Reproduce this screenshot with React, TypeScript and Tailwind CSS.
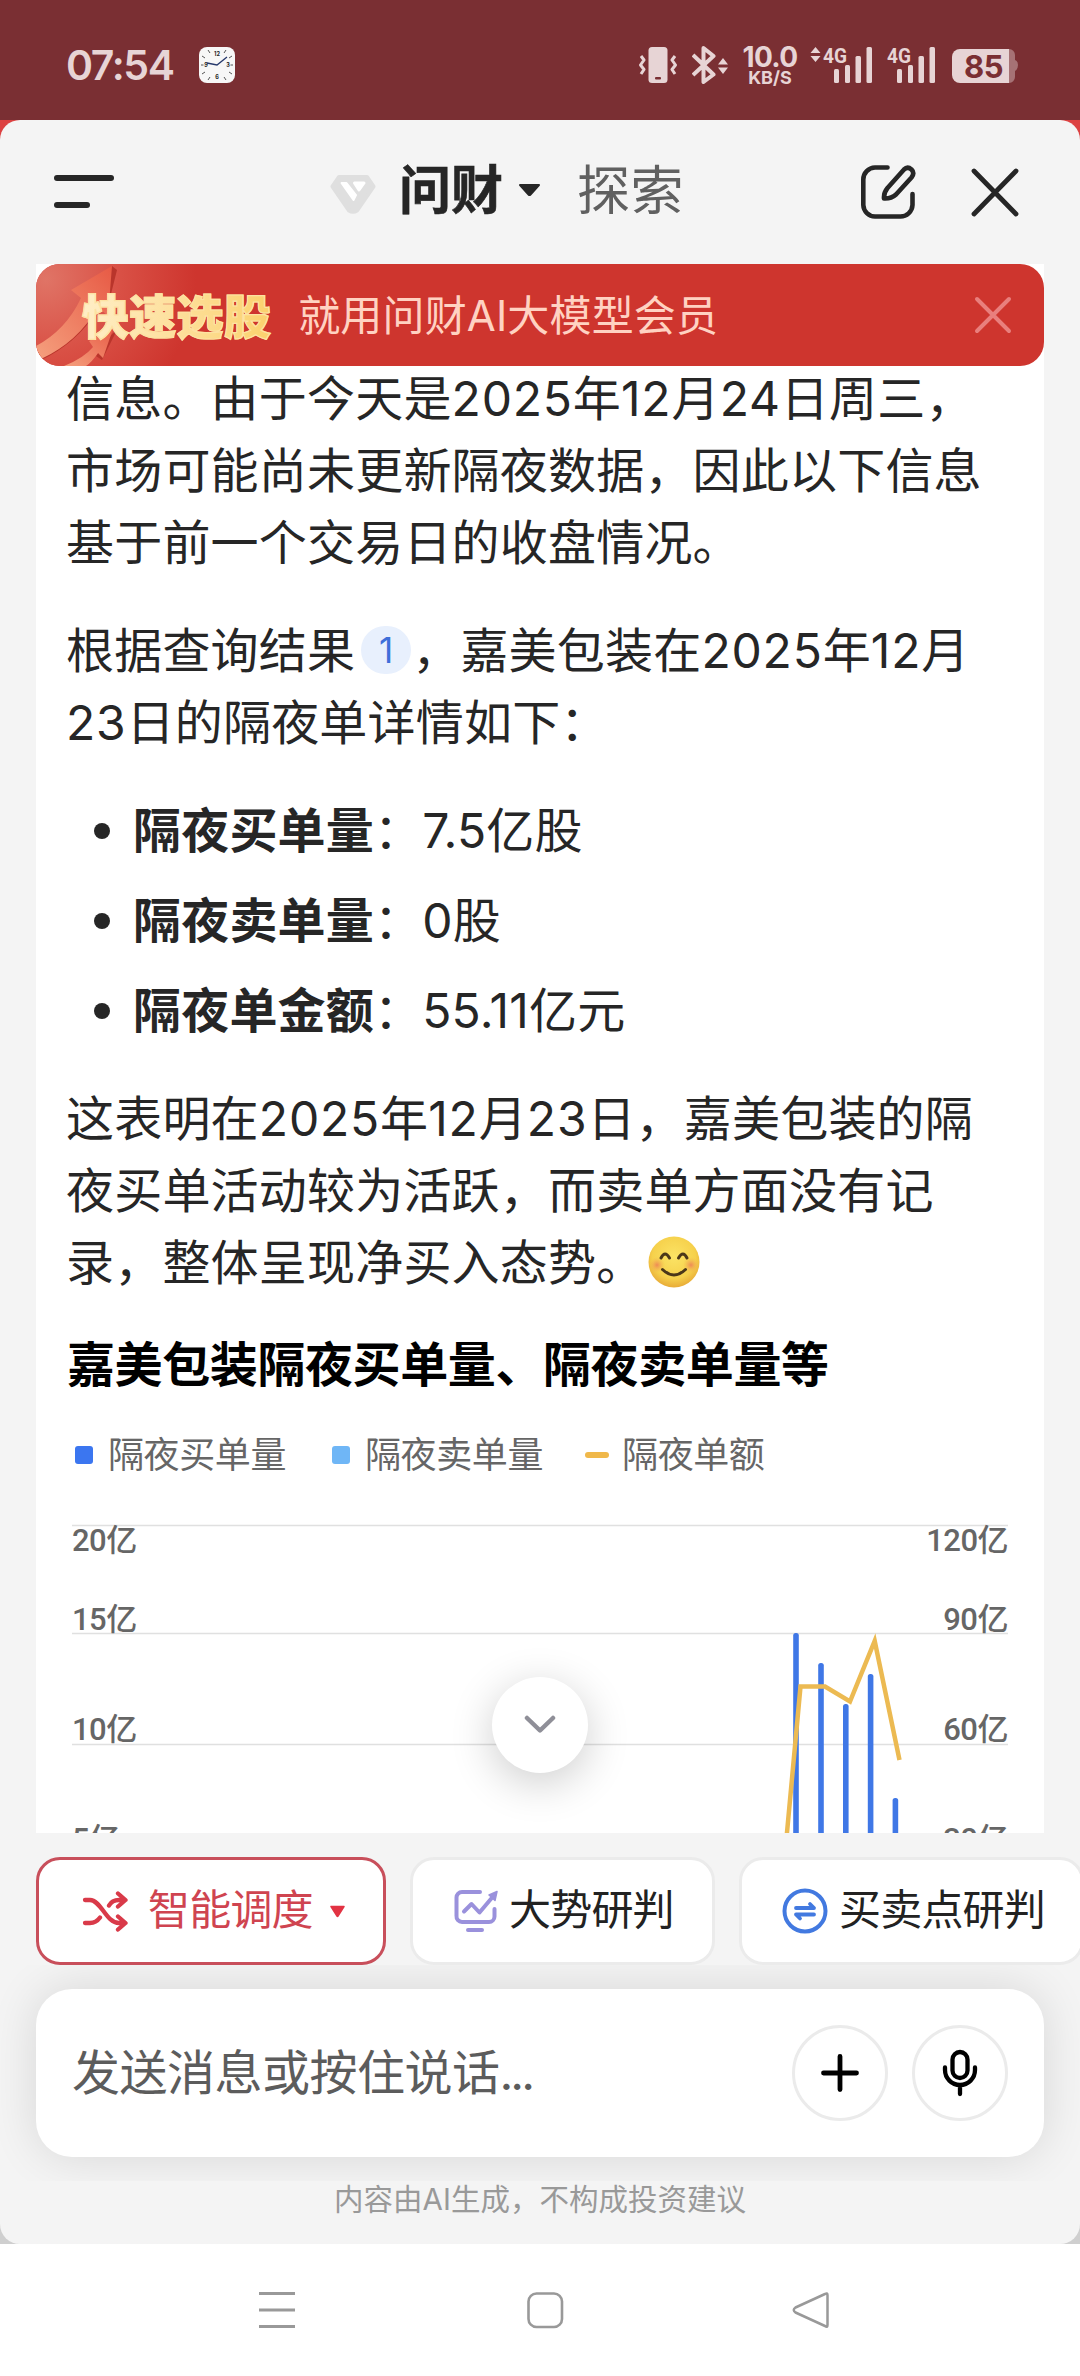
import type { ReactNode } from "react";

const BARS = [
  { x: 724, top: 108 },
  { x: 749, top: 138 },
  { x: 773.8, top: 179 },
  { x: 798.6, top: 149 },
  { x: 823.4, top: 273 },
];

function Signal() {
  return (
    <g fill="#e7d4d5">
      <rect x="0" y="22" width="5" height="14" rx="1.5" />
      <rect x="11" y="18" width="5" height="18" rx="1.5" />
      <rect x="21.5" y="9" width="5.5" height="27" rx="1.5" />
      <rect x="32.5" y="0" width="5.5" height="36" rx="1.5" />
    </g>
  );
}

function StatusBar() {
  return (
    <div className="flex h-[120px] items-start bg-[#7a2f33] text-[#e7d4d5]">
      <div className="mt-[41px] ml-[66px] w-[110px] text-[41px] leading-[48px] font-semibold tracking-[-1.4px]">07:54</div>
      <svg className="mt-[47px] ml-[23px]" width="36" height="36" viewBox="0 0 36 36">
        <rect width="36" height="36" rx="8" fill="#f7f7f7" />
        <g stroke="#555" strokeWidth="1">
          <path d="M9 3l2 3M27 3l-2 3M3 9l3 2M33 9l-3 2M3 27l3-2M33 27l-3-2M9 33l2-3M27 33l-2-3M2 18h2.500M31.500 18h2.500" />
        </g>
        <g fontSize="5.500" fontWeight="700" fill="#222" textAnchor="middle" fontFamily="Inter, sans-serif">
          <text x="18" y="9">12</text>
          <text x="29" y="20">3</text>
          <text x="18" y="32">6</text>
          <text x="7" y="20">9</text>
        </g>
        <path d="M8 16l10 2L28 10" fill="none" stroke="#25386b" strokeWidth="1.300" />
      </svg>
      <svg className="mt-[47px] ml-[404px]" width="38" height="36" viewBox="0 0 38 36">
        <rect x="9.500" y="0" width="19" height="36" rx="3.500" fill="#e7d4d5" />
        <rect x="16" y="30" width="6" height="2.500" rx="1" fill="#7a2f33" />
        <path d="M2 9l3 4-3.500 5L5 22.500 2 27M36 9l-3 4 3.500 5-3.500 4.500 3 4.500" fill="none" stroke="#e7d4d5" strokeWidth="3" strokeLinejoin="round" />
      </svg>
      <svg className="mt-[46px] ml-[15px]" width="37" height="38" viewBox="0 0 37 38">
        <path d="M1 9l20.500 19.500L11.500 36V2l10 8L1 29" fill="none" stroke="#e7d4d5" strokeWidth="4" strokeLinejoin="round" />
        <path d="M31 12l5 6.500H26zM31 28l5-6.500H26z" fill="#e7d4d5" />
      </svg>
      <div className="mt-[45px] ml-[13px] flex w-[56px] flex-col items-center font-bold">
        <span className="text-[28px] leading-[24px] tracking-[-0.6px]">10.0</span>
        <span className="text-[18px] leading-[18px]">KB/S</span>
      </div>
      <svg className="mt-[46px] ml-[12px]" width="64" height="38" viewBox="0 0 64 38">
        <path d="M5.500 1l5 6h-10zM5.500 16l5-6h-10z" fill="#e7d4d5" />
        <text x="13" y="17" fontSize="21" fontWeight="700" fill="#e7d4d5" textLength="24" lengthAdjust="spacingAndGlyphs" fontFamily="Roboto, sans-serif">4G</text>
        <g transform="translate(24 1)"><Signal /></g>
      </svg>
      <svg className="mt-[46px] ml-[12px]" width="52" height="38" viewBox="0 0 52 38">
        <text x="1" y="17" fontSize="21" fontWeight="700" fill="#e7d4d5" textLength="24" lengthAdjust="spacingAndGlyphs" fontFamily="Roboto, sans-serif">4G</text>
        <g transform="translate(11 1)"><Signal /></g>
      </svg>
      <svg className="mt-[49px] ml-[14px]" width="66" height="34" viewBox="0 0 66 34">
        <path d="M57 0a6 6 0 0 1 6 6v5q3 1 3 5t-3 6v6a6 6 0 0 1-6 6z" fill="#a67275" />
        <path d="M8 0H57V34H8a8 8 0 0 1-8-8V8a8 8 0 0 1 8-8z" fill="#e7d4d5" />
        <text x="31.500" y="28.500" fontSize="31" fontWeight="700" fill="#7a2f33" textAnchor="middle" letterSpacing="-0.500" fontFamily="Inter, sans-serif">85</text>
      </svg>
    </div>
  );
}

function Header() {
  return (
    <div className="flex h-[144px] items-start pt-[36px]">
      <svg className="mt-[18px] ml-[54px]" width="60" height="36" viewBox="0 0 60 36">
        <rect y="1" width="60" height="6" rx="3" fill="#262626" />
        <rect y="28" width="36" height="6" rx="3" fill="#262626" />
      </svg>
      <svg className="mt-[17px] ml-[215px]" width="48" height="42" viewBox="0 0 48 42">
        <path d="M10 4H38L44.500 13.500 28 37.500Q24 40 20 37.500L3.500 13.500z" fill="#dfdfdf" stroke="#dfdfdf" strokeWidth="4" strokeLinejoin="round" />
        <path d="M12.500 10h5L27 22l-2.500 5z" fill="#fff" stroke="#fff" strokeWidth="2" strokeLinejoin="round" />
        <path d="M25.500 10H35l-5 7z" fill="#fff" stroke="#fff" strokeWidth="3" strokeLinejoin="round" />
      </svg>
      <div className="mt-[1px] ml-[22px] text-[52px] leading-[68px] font-bold text-[#262626] [-webkit-text-stroke:0.6px_#262626]">问财</div>
      <svg className="mt-[27px] ml-[15px]" width="23" height="15" viewBox="0 0 23 15">
        <path d="M2 2H21L12.500 11.500Q11.500 12.500 10.500 11.500z" fill="#262626" stroke="#262626" strokeWidth="2" strokeLinejoin="round" />
      </svg>
      <div className="mt-[1px] ml-[36px] text-[53px] leading-[68px] tracking-[0.5px] text-[#606060]">探索</div>
      <svg className="mt-[8px] ml-[176px]" width="56" height="56" viewBox="0 0 56 56" fill="none" stroke="#262626" strokeWidth="4.600" strokeLinecap="round" strokeLinejoin="round">
        <path d="M27.500 3.500H15A12 12 0 0 0 3.300 15.500V41A12 12 0 0 0 15 52.500H40A12 12 0 0 0 52.500 41V30" />
        <path d="M24 34.500Q23.500 29 27.500 24L44 5.500Q47.500 2 51.500 5.500 55 9 51.500 13.500L36 30.500Q31 35 24 34.500z" />
      </svg>
      <svg className="mt-[12px] ml-[54px]" width="50" height="50" viewBox="0 0 50 50">
        <path d="M4 3L46 46M46 3L4 46" stroke="#262626" strokeWidth="4.800" strokeLinecap="round" />
      </svg>
    </div>
  );
}

function Banner() {
  return (
    <div className="relative z-10 flex h-[102px] items-center overflow-hidden rounded-[24px] bg-[#ce352e]">
      <svg className="absolute top-0 left-0" width="180" height="102" viewBox="0 0 180 102">
        <defs>
          <radialGradient id="glow" gradientUnits="userSpaceOnUse" cx="10" cy="15" r="150">
            <stop offset="0" stopColor="#e07466" />
            <stop offset="0.500" stopColor="#d95045" />
            <stop offset="1" stopColor="#ce352e" />
          </radialGradient>
          <linearGradient id="arrow" x1="0" y1="1" x2="1" y2="0">
            <stop offset="0" stopColor="#f5a07e" />
            <stop offset="1" stopColor="#e75a45" />
          </linearGradient>
        </defs>
        <rect width="180" height="102" fill="url(#glow)" />
        <path d="M5 96Q40 80 62 46L72 42 81 6 76 2 46 50 0 90z" fill="#b9352b" />
        <path d="M0 82Q30 66 45 34L35 26 76 2 72 52 62 43Q42 78 5 95L0 90z" fill="url(#arrow)" />
        <path d="M66 96L81 66 76 70 60 92z" fill="#b9352b" />
        <path d="M28 102Q48 94 57 83L53 77 78 62 67 94 62 89Q56 98 50 102z" fill="url(#arrow)" />
      </svg>
      <span className="relative mt-[3px] ml-[46px] bg-gradient-to-r from-[#ffeec6] to-[#fbd16c] bg-clip-text text-[47px] leading-[60px] font-black tracking-[0.3px] text-transparent [-webkit-text-stroke:1.2px_#fde2a2]">快速选股</span>
      <span className="relative mt-[1px] ml-[27px] text-[42px] leading-[60px] tracking-[0.15px] text-[#ffd2c2]">就用问财AI大模型会员</span>
      <svg className="absolute top-[32px] right-[32px]" width="38" height="38" viewBox="0 0 38 38">
        <path d="M3 3L35 35M35 3L3 35" stroke="#e97f7d" strokeWidth="4" strokeLinecap="round" />
      </svg>
    </div>
  );
}

function Num({ children }: { children: ReactNode }) {
  return <span className="tracking-[0.8px]">{children}</span>;
}

function Bullet({ label, value }: { label: string; value: string }) {
  return (
    <li className="mb-[18px] flex items-center">
      <i className="mr-[23px] ml-[28px] h-[16px] w-[16px] rounded-full bg-[#262626]" />
      <b>{label}</b>：{value}
    </li>
  );
}

function Blush() {
  return (
    <svg className="ml-[3px] inline-block align-[-9px]" width="54" height="54" viewBox="0 0 54 54">
      <defs>
        <radialGradient id="face" cx="0.500" cy="0.400" r="0.600">
          <stop offset="0" stopColor="#fbe365" />
          <stop offset="0.700" stopColor="#f6d14c" />
          <stop offset="1" stopColor="#e8ab37" />
        </radialGradient>
        <radialGradient id="cheek">
          <stop offset="0" stopColor="#ee8a56" />
          <stop offset="1" stopColor="#f2b84d" stopOpacity="0" />
        </radialGradient>
      </defs>
      <circle cx="27" cy="27" r="25.500" fill="url(#face)" />
      <circle cx="10" cy="30" r="8" fill="url(#cheek)" />
      <circle cx="44" cy="30" r="8" fill="url(#cheek)" />
      <path d="M14 23Q18 15 22.500 23M31.500 23Q36 15 40 23" fill="none" stroke="#4b3719" strokeWidth="3" strokeLinecap="round" />
      <path d="M15.500 34.500Q27 45.500 38.500 34.500" fill="none" stroke="#4b3719" strokeWidth="3" strokeLinecap="round" />
    </svg>
  );
}

function LegendItem({ mark, children }: { mark: ReactNode; children: ReactNode }) {
  return (
    <div className="flex items-center">
      {mark}
      {children}
    </div>
  );
}

function Chart() {
  return (
    <svg className="mt-[44px] ml-[36px] block" width="936" height="310" viewBox="0 0 936 310">
      <g stroke="#e0e0e0" strokeWidth="1.500">
        <path d="M0 2.500H936M0 110.500H936M0 221.500H936" />
      </g>
      <g fill="#3f77e6">
        {BARS.map((b) => (
          <rect key={b.x} x={b.x - 2.8} y={b.top + 2} width="5.600" height="330" rx="2.500" />
        ))}
      </g>
      <path d="M714.500 315L728.500 163.500H753L778 178.500 802.700 118 827.500 237" fill="none" stroke="#ecba52" strokeWidth="4.500" />
      <g fontSize="31" fontWeight="500" fill="#666" fontFamily="Roboto, 'Noto Sans CJK SC', sans-serif" letterSpacing="-0.500">
        <text x="0" y="27.500">20亿</text>
        <text x="0" y="106.500">15亿</text>
        <text x="0" y="216.500">10亿</text>
        <text x="0" y="326.500">5亿</text>
        <g textAnchor="end">
          <text x="936" y="27.500">120亿</text>
          <text x="936" y="106.500">90亿</text>
          <text x="936" y="216.500">60亿</text>
          <text x="936" y="326.500">30亿</text>
        </g>
      </g>
    </svg>
  );
}

function Answer() {
  return (
    <div className="relative mx-[36px] h-[1569px] overflow-hidden bg-white">
      <Banner />
      <div className="-mt-[3px] pl-[30px] text-[48px] leading-[72px] tracking-[0.2px] whitespace-nowrap text-[#262626]">
        <p>
          信息。由于今天是<Num>2025</Num>年<Num>12</Num>月<Num>24</Num>日周三，
          <br />
          市场可能尚未更新隔夜数据，因此以下信息
          <br />
          基于前一个交易日的收盘情况。
        </p>
        <p className="mt-[36px]">
          根据查询结果
          <span className="mr-[1px] ml-[6px] inline-flex h-[48px] w-[50px] items-center justify-center rounded-full bg-[#e8f0fd] align-[5px] text-[35px] leading-[48px] text-[#3f6fd9]">1</span>
          ，嘉美包装在<Num>2025</Num>年<Num>12</Num>月
          <br />
          <Num>23</Num>日的隔夜单详情如下：
        </p>
        <ul className="mt-[36px]">
          <Bullet label="隔夜买单量" value="7.5亿股" />
          <Bullet label="隔夜卖单量" value="0股" />
          <Bullet label="隔夜单金额" value="55.11亿元" />
        </ul>
        <p className="mt-[36px]">
          这表明在<Num>2025</Num>年<Num>12</Num>月<Num>23</Num>日，嘉美包装的隔
          <br />
          夜买单活动较为活跃，而卖单方面没有记
          <br />
          录，整体呈现净买入态势。
          <Blush />
        </p>
      </div>
      <h2 className="mt-[31px] pl-[31px] text-[48px] leading-[70px] font-bold tracking-[-0.4px] whitespace-nowrap text-black">
        嘉美包装隔夜买单量、隔夜卖单量等
      </h2>
      <div className="mt-[31px] flex h-[48px] items-center pl-[39px] text-[36px] leading-[48px] tracking-[-0.4px] text-[#666]">
        <LegendItem mark={<i className="mr-[15px] h-[18px] w-[18px] rounded-[3px] bg-[#3b76f0]" />}>隔夜买单量</LegendItem>
        <LegendItem mark={<i className="mr-[15px] ml-[46px] h-[18px] w-[18px] rounded-[3px] bg-[#6fb6f6]" />}>隔夜卖单量</LegendItem>
        <LegendItem mark={<i className="mr-[13px] ml-[42px] h-[6px] w-[24px] rounded-[3px] bg-[#f0b84a]" />}>隔夜单额</LegendItem>
      </div>
      <Chart />
      <div className="absolute bottom-[60px] left-[456px] flex h-[96px] w-[96px] items-center justify-center rounded-full bg-white shadow-[0_10px_44px_rgba(0,0,0,0.2)]">
        <svg width="34" height="20" viewBox="0 0 34 20">
          <path d="M4 3L17 15.500 30 3" fill="none" stroke="#8f8f98" strokeWidth="4.500" strokeLinecap="round" strokeLinejoin="round" />
        </svg>
      </div>
    </div>
  );
}

function Chips() {
  return (
    <div className="mt-[24px] flex h-[108px] shrink-0 gap-[24px] overflow-hidden pl-[36px] text-[42px] leading-[60px] tracking-[-0.8px] whitespace-nowrap text-[#222]">
      <div className="flex w-[350px] shrink-0 items-center rounded-[24px] border-[3px] border-[#c84f5b] bg-white pl-[43px] text-[#cf4450]">
        <svg className="mr-[20px]" width="46" height="42" viewBox="0 0 46 42" fill="none" stroke="#d93a49" strokeWidth="4.300" strokeLinecap="round" strokeLinejoin="round">
          <path d="M3 10H8C19 10 24 33 37 33H43M3 33H8Q14 33 18 27.500M27 15.500Q30 10 37 10H43M36 3.500L43.500 10 36 16.500M36 26.500L43.500 33 36 39.500" />
        </svg>
        <span className="-mt-[2px]">智能调度</span>
        <svg className="ml-[16px]" width="17" height="13" viewBox="0 0 17 13">
          <path d="M2 1.500H15L9 11Q8.500 11.800 8 11z" fill="#e23343" stroke="#e23343" strokeWidth="1.500" strokeLinejoin="round" />
        </svg>
      </div>
      <div className="flex w-[305px] shrink-0 items-center rounded-[24px] border-[3px] border-[#ebebeb] bg-white pl-[41px]">
        <svg className="mr-[9px]" width="46" height="46" viewBox="0 0 46 46" fill="none" stroke="#9a91dc" strokeWidth="4" strokeLinecap="round" strokeLinejoin="round">
          <path d="M26 4H8A5.500 5.500 0 0 0 2.500 9.500V28A5.500 5.500 0 0 0 8 34H35A5.500 5.500 0 0 0 40.500 28.500V21M14 42H28M10 23.500L17.500 16 25.500 24.500 39 8.500" />
          <path d="M43 3.500L35 7 41 12.500z" fill="#9a91dc" strokeWidth="1.500" />
        </svg>
        <span className="-mt-[2px]">大势研判</span>
      </div>
      <div className="flex w-[345px] shrink-0 items-center rounded-[24px] border-[3px] border-[#ebebeb] bg-white pl-[40px]">
        <svg className="mr-[11px]" width="46" height="46" viewBox="0 0 46 46" fill="none" stroke="#4279e0" strokeLinecap="round" strokeLinejoin="round">
          <circle cx="23" cy="23" r="20.500" strokeWidth="4" />
          <path d="M14 20H32L28 16M32 26.500H14L18 30.500" strokeWidth="3.800" />
        </svg>
        <span className="-mt-[2px]">买卖点研判</span>
      </div>
    </div>
  );
}

function Composer() {
  return (
    <div className="h-[216px] overflow-hidden pt-[24px]">
      <div className="mx-[36px] flex h-[168px] items-center rounded-[36px] bg-white pr-[36px] pl-[36px] shadow-[0_0_48px_rgba(0,0,0,0.12)]">
        <span className="flex-1 text-[48px] leading-[72px] tracking-[-0.5px] text-[#5c5c5c]">
          发送消息或按住说话<span className="tracking-[-3px]">...</span>
        </span>
        <div className="flex h-[96px] w-[96px] items-center justify-center rounded-full border-[3px] border-[#ebebeb]">
          <svg width="38" height="38" viewBox="0 0 38 38">
            <path d="M19 2.500V35.500M2.500 19H35.500" stroke="#000" strokeWidth="4.800" strokeLinecap="round" />
          </svg>
        </div>
        <div className="ml-[24px] flex h-[96px] w-[96px] items-center justify-center rounded-full border-[3px] border-[#ebebeb]">
          <svg width="38" height="48" viewBox="0 0 38 48" fill="none" stroke="#000" strokeWidth="4.300" strokeLinecap="round">
            <rect x="11.500" y="3" width="15" height="26" rx="7.500" />
            <path d="M4 18.500V21A15 15 0 0 0 34 21V18.500M19 36.500V45" />
          </svg>
        </div>
      </div>
    </div>
  );
}

function NavBar() {
  return (
    <div className="flex h-[132px] items-center bg-white">
      <svg className="ml-[258px]" width="38" height="38" viewBox="0 0 38 38">
        <path d="M1 2.500H37M1 19H37M1 35.500H37" stroke="#999" strokeWidth="2.800" />
      </svg>
      <svg className="ml-[230px]" width="38" height="38" viewBox="0 0 38 38">
        <rect x="2.500" y="2.500" width="33.500" height="33.500" rx="8" fill="none" stroke="#999" strokeWidth="2.600" />
      </svg>
      <svg className="ml-[228px]" width="38" height="38" viewBox="0 0 38 38">
        <path d="M35.500 4V34Q35.500 37 33 35L3.500 21.500Q0 19 3.500 16.500L33 3Q35.500 1.500 35.500 4z" fill="none" stroke="#999" strokeWidth="2.500" strokeLinejoin="round" />
      </svg>
    </div>
  );
}

export default function App() {
  return (
    <div className="h-[2376px] w-[1080px] overflow-hidden bg-white font-['Inter','Noto_Sans_CJK_SC',sans-serif]">
      <StatusBar />
      <div className="h-[2124px] bg-linear-to-b from-[#dc4141] from-50% to-[#cfcfcf] to-50%">
        <div className="h-full overflow-hidden rounded-[20px] bg-[#f4f4f4]">
          <Header />
          <Answer />
          <Chips />
          <Composer />
          <div className="h-[63px] text-center text-[29.500px] leading-[36px] text-[#999]">内容由AI生成，不构成投资建议</div>
        </div>
      </div>
      <NavBar />
    </div>
  );
}
